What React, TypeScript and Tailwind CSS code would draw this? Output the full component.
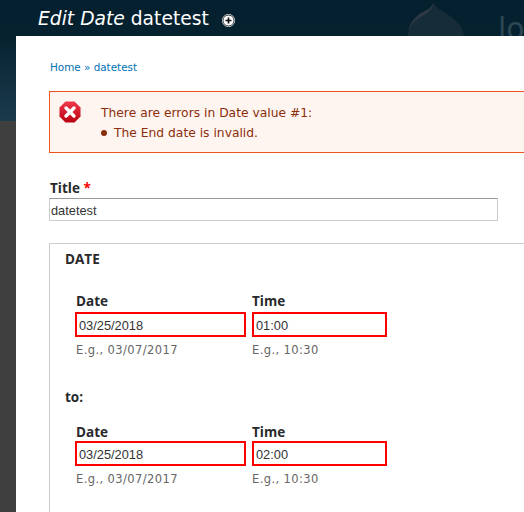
export default function App() {
  const sans = "font-['DejaVu_Sans',sans-serif]";
  const bold = "font-['Open_Sans',sans-serif] text-[13.5px] font-bold text-[#27292b]";
  const inputBox = "h-[25px] border-[2px] border-[#ff0000] bg-white pl-[2px] font-['Liberation_Sans',sans-serif] text-[12.8px] leading-[23px] text-[#333]";
  const hint = "mt-[5px] h-[16px] text-[11.5px] leading-[16px] tracking-[0.4px] text-[#666]";
  const DateRow = ({ date, time, tight }: { date: string; time: string; tight?: boolean }) => (
    <div className="flex gap-[6px] pl-[25px]">
      <div className="w-[171px]">
        <div className={`ml-px h-[16px] leading-[16px] ${bold}`}>Date</div>
        <div className={`${tight ? "mt-[1px]" : "mt-[3px]"} ${inputBox}`}>{date}</div>
        <div className={`ml-px ${hint}`}>E.g., 03/07/2017</div>
      </div>
      <div className="w-[135px]">
        <div className={`h-[16px] leading-[16px] ${bold}`}>Time</div>
        <div className={`${tight ? "mt-[1px]" : "mt-[3px]"} ${inputBox}`}>{time}</div>
        <div className={hint}>E.g., 10:30</div>
      </div>
    </div>
  );
  return (
    <div className={`flex h-[512px] w-[524px] flex-col overflow-hidden bg-[linear-gradient(#04202f_0px,#06222f_36px,#1b3b4d_121px,#3f3f3f_121px,#3f3f3f_512px)] ${sans}`}>
      <header className="relative flex h-9 shrink-0 items-center overflow-hidden pl-[38px]">
        <h1 className="mt-[1px] text-[18.7px] leading-[36px] text-white">
          <em>Edit Date</em> datetest
        </h1>
        <svg className="ml-[13px] mt-[5px]" width="13" height="13" viewBox="0 0 13 13">
          <circle cx="6.5" cy="6.5" r="5.6" fill="#fff" stroke="#111" strokeWidth="1" />
          <circle cx="6.5" cy="6.5" r="6.2" fill="none" stroke="#fff" strokeWidth="0.7" />
          <path d="M6.5 3.5v6M3.5 6.5h6" stroke="#111" strokeWidth="1.7" />
        </svg>
        <svg className="absolute left-[404px] top-0" width="62" height="36" viewBox="0 0 62 36">
          <path d="M30 2c1 6 6 7 13 12 9 6 16 13 17 22H4c0-10 6-18 14-23 6-3 11-6 12-11z" fill="#172c39" />
          <path d="M30 2c-2 6-7 8-13 11-6 4-11 10-13 18 4-9 10-13 16-16 5-3 9-6 10-13z" fill="#2f3b44" />
        </svg>
        <span className="absolute left-[498px] top-[11px] text-[30px] leading-[36px] text-[#2c4654]">log</span>
      </header>

      <main className="ml-4 flex-1 bg-white pl-[33px]">
        <nav className="ml-px mt-[24px] h-[14px] text-[10.4px] leading-[14px] text-[#0071b3]">Home » datetest</nav>

        <div className="mt-[17px] -mr-2 flex h-[62px] border border-[#ed541d] bg-[#fef5f1] text-[12.3px] leading-[20px] text-[#8c2e0b]">
          <svg className="ml-[9px] mt-[9px] shrink-0" width="22" height="22" viewBox="0 0 22 22">
            <defs>
              <linearGradient id="err" x1="0" y1="0" x2="0" y2="1">
                <stop offset="0" stopColor="#f0394a" />
                <stop offset="1" stopColor="#b80012" />
              </linearGradient>
            </defs>
            <path d="M6.5 0.5h9l6 6v9l-6 6h-9l-6-6v-9z" fill="url(#err)" />
            <path d="M7 7l8 8M15 7l-8 8" stroke="#fff" strokeWidth="3.4" strokeLinecap="round" />
          </svg>
          <div className="ml-[20px] mt-[11px]">
            <div>There are errors in Date value #1:</div>
            <div className="flex items-center">
              <span className="mr-[7px] h-[6px] w-[6px] rounded-full bg-[#8c2e0b]" />
              The End date is invalid.
            </div>
          </div>
        </div>

        <div className={`ml-px mt-[27px] h-[17px] leading-[17px] ${bold}`}>
          Title <span className="text-[#ff0000]">*</span>
        </div>
        <div className="mt-px h-[23px] w-[449px] border border-[#ccc] border-t-[#999] pl-[1px] font-['Liberation_Sans',sans-serif] text-[12.8px] leading-[23px] text-[#333]">
          datetest
        </div>

        <section className="mt-[22px] -mr-2 h-[300px] border border-[#ccc]">
          <h2 className={`mt-[7px] ml-[15px] h-[16px] leading-[16px] ${bold}`}>DATE</h2>
          <div className="mt-[26px]">
            <DateRow date="03/25/2018" time="01:00" />
          </div>
          <div className={`mt-[31px] ml-[15px] h-[16px] leading-[16px] ${bold}`}>to:</div>
          <div className="mt-[19px]">
            <DateRow date="03/25/2018" time="02:00" tight />
          </div>
        </section>
      </main>
    </div>
  );
}
